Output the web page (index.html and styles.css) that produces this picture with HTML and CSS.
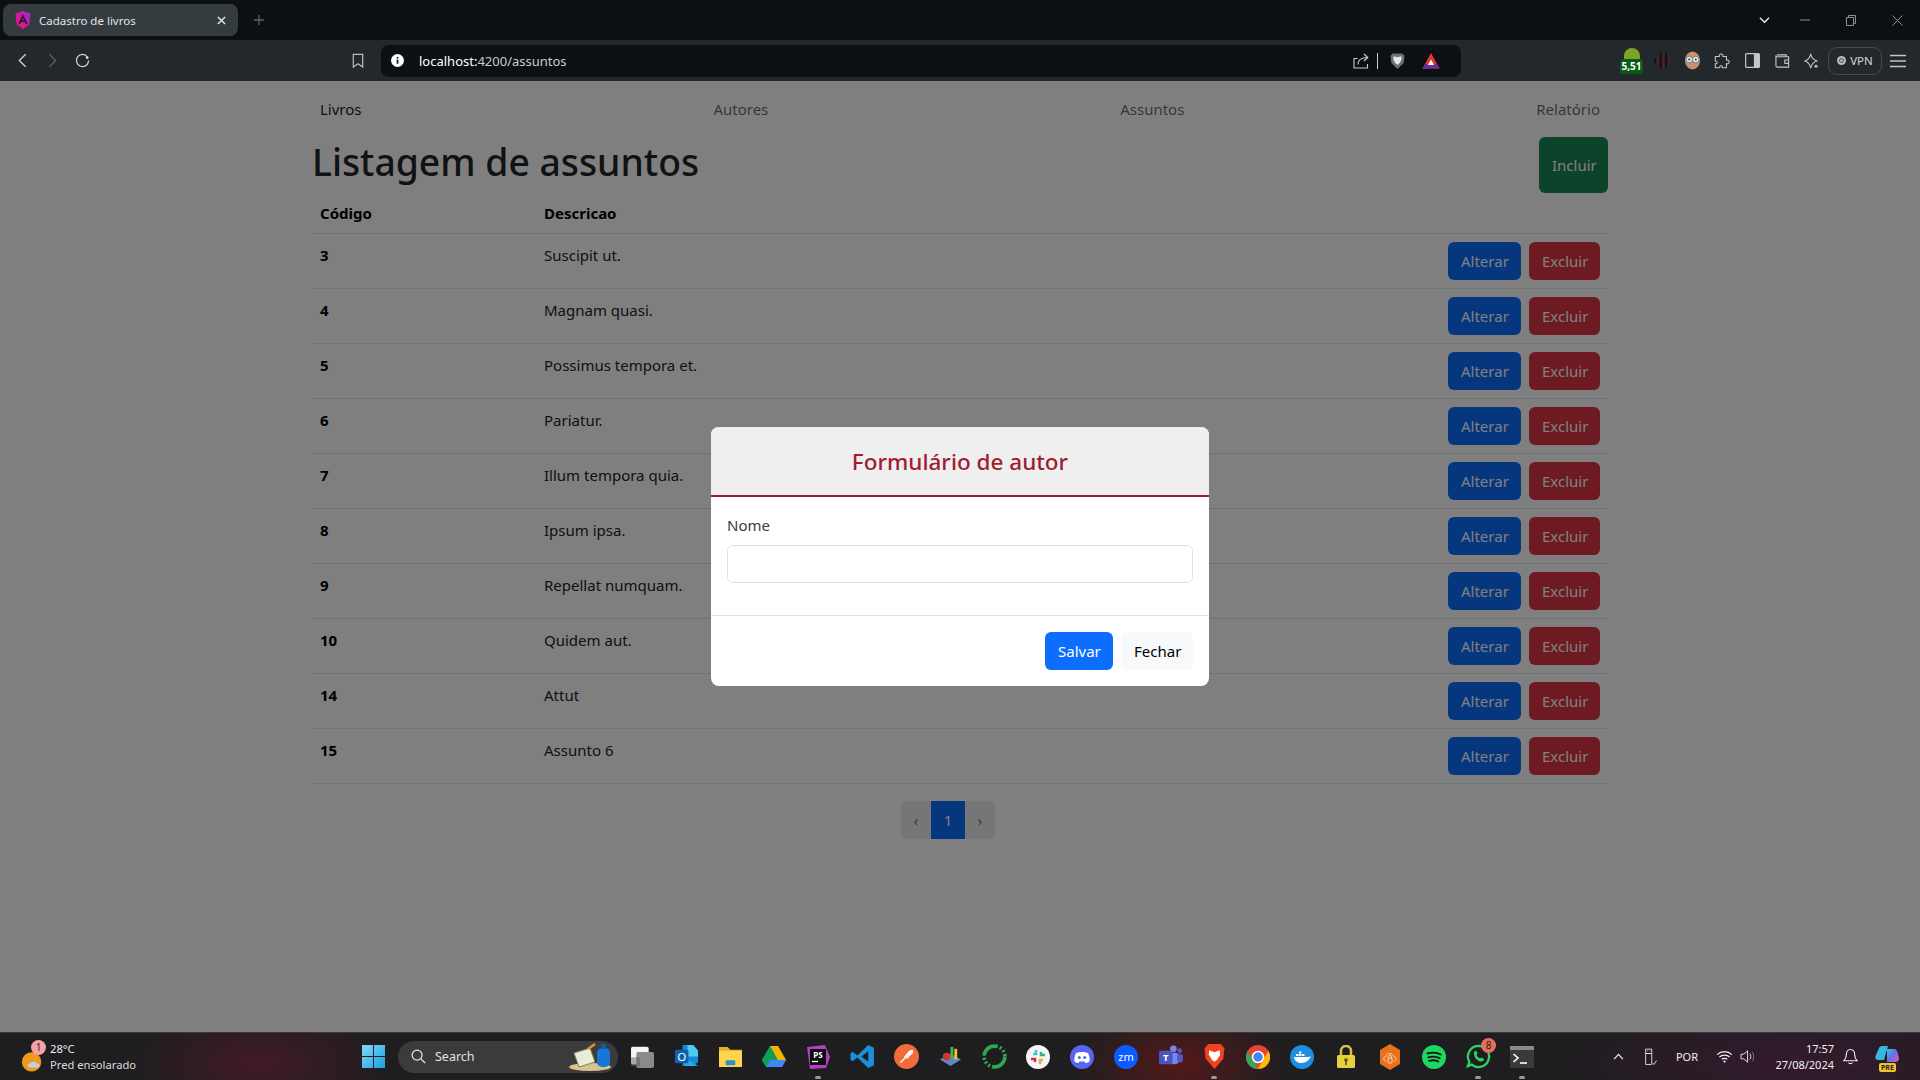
FILE: index.html
```html
<!DOCTYPE html>
<html>
  <head>
    <title>Cadastro de livros</title>
    <meta charset="UTF-8">
    <meta name="viewport" content="width=device-width, initial-scale=1.0">
    <link rel="stylesheet" href="styles.css">
  </head>
  <body>
    <!-- browser tabs -->
    <div class="tabstrip">
      <div class="tab">
        <svg class="favicon" viewBox="0 0 16 18" width="16" height="18">
          <defs><linearGradient id="ng" x1="0" y1="1" x2="1" y2="0"><stop offset="0" stop-color="#f0148c"/><stop offset=".55" stop-color="#d0189c"/><stop offset="1" stop-color="#7a3be8"/></linearGradient></defs>
          <path d="M8 0 15.500 2.600 14.300 13.200 8 18 1.700 13.200.5 2.600Z" fill="url(#ng)"/>
          <path d="M8 3 12.600 13H10.800L9.900 10.900H6.100L5.200 13H3.400ZM8 7 6.900 9.500H9.100Z" fill="#2a1830"/>
        </svg>
        <span class="tab-title">Cadastro de livros</span>
        <svg class="tab-close" viewBox="0 0 10 10" width="9" height="9"><path d="M1 1 9 9M9 1 1 9" stroke="#e8eaed" stroke-width="1.500"/></svg>
      </div>
      <svg class="tab-new" viewBox="0 0 12 12" width="12" height="12"><path d="M6 1V11M1 6H11" stroke="#5a6065" stroke-width="1.300"/></svg>
      <div class="win-controls">
        <div class="win-btn"><svg viewBox="0 0 12 8" width="11" height="8"><path d="M1 1.500 6 6.500 11 1.500" fill="none" stroke="#e8eaed" stroke-width="1.500"/></svg></div>
        <div class="win-btn"><svg viewBox="0 0 10 2" width="10" height="2"><path d="M0 1H10" stroke="#8d9195"/></svg></div>
        <div class="win-btn"><svg viewBox="0 0 10 11" width="10" height="11"><path d="M.5 2.500H7.500V10.500H.5ZM2.500 2.500V.5H9.500V8.500H7.500" fill="none" stroke="#8d9195"/></svg></div>
        <div class="win-btn"><svg viewBox="0 0 11 11" width="11" height="11"><path d="M.5.5 10.500 10.500M10.500.5.5 10.500" stroke="#8d9195"/></svg></div>
      </div>
    </div>

    <!-- browser toolbar -->
    <div class="toolbar">
      <div class="tool-cell"><svg viewBox="0 0 10 16" width="9" height="15"><path d="M8.500 1 1.500 8 8.500 15" fill="none" stroke="#d5d8da" stroke-width="1.400"/></svg></div>
      <div class="tool-cell"><svg viewBox="0 0 10 16" width="9" height="15"><path d="M1.500 1 8.500 8 1.500 15" fill="none" stroke="#5c6165" stroke-width="1.400"/></svg></div>
      <div class="tool-cell"><svg viewBox="0 0 16 16" width="15" height="15"><path d="M13.500 4.500A6.500 6.500 0 1 0 14.500 8" fill="none" stroke="#d5d8da" stroke-width="1.300"/><circle cx="13" cy="5" r="1.500" fill="#d5d8da"/></svg></div>
      <div class="tool-cell bookmark"><svg viewBox="0 0 12 16" width="12" height="15"><path d="M1 1.500H11V15L6 11.500 1 15Z" fill="none" stroke="#b8bcbf" stroke-width="1.300"/></svg></div>
      <div class="urlbar">
        <svg class="url-info" viewBox="0 0 14 14" width="13" height="13"><circle cx="7" cy="7" r="7" fill="#fff"/><path d="M7 6V10.500M7 3.200V4.800" stroke="#111" stroke-width="1.800"/></svg>
        <span class="url-text"><span class="url-host">localhost:</span>4200/assuntos</span>
        <svg class="url-share" viewBox="0 0 16 16" width="16" height="16"><path d="M4.500 5.500H1V15H14.500V11M5 11.500C5 6.500 9 4.500 14.500 4.500M11 1 14.800 4.500 11 8" fill="none" stroke="#c9ccce" stroke-width="1.100"/></svg>
        <span class="url-sep"></span>
        <svg class="url-brave" viewBox="0 0 16 18" width="15" height="18"><path d="M3 1H13L15.500 3.500 14.500 11 8 17.500 1.500 11 .5 3.500Z" fill="#6d6f78"/><path d="M4 4 8 5 12 4 12.500 7 10.500 11 8 13 5.500 11 3.500 7Z" fill="#e6e7ea"/></svg>
        <svg class="url-bat" viewBox="0 0 18 18" width="18" height="18"><path d="M9 1 17.500 16.500H.5Z" fill="#e0382f"/><path d="M.5 16.500 3 12H15L17.500 16.500Z" fill="#6b2f96"/><path d="M9 7.500 12 13H6Z" fill="#fff"/></svg>
      </div>
      <div class="ext-group">
        <div class="tool-cell">
          <div class="ext-gas"><span class="gas-dome"></span><span class="gas-badge">5,51</span></div>
        </div>
        <div class="tool-cell"><svg viewBox="0 0 18 20" width="17" height="20"><path d="M1 7V13M7 1V18M13 1V17" stroke="#0d0d0f" stroke-width="1.500"/><path d="M4 5V15M10 4V19M16 6V14" stroke="#6a1820" stroke-width="1.500"/></svg></div>
        <div class="tool-cell"><svg viewBox="0 0 18 20" width="17" height="19"><ellipse cx="9" cy="10" rx="8" ry="9.500" fill="#c49272"/><circle cx="5.500" cy="9" r="3.500" fill="#dfe7e9" stroke="#777"/><circle cx="12.500" cy="9" r="3.500" fill="#dfe7e9" stroke="#777"/><circle cx="5.500" cy="9" r="1" fill="#333"/><circle cx="12.500" cy="9" r="1" fill="#333"/></svg></div>
        <div class="tool-cell"><svg viewBox="0 0 18 18" width="16" height="16"><path d="M7 1.500C9 .5 10.500 2 10 4H14V8C16.500 7.500 17.500 9 17 10.500 16.500 12 15.500 12.500 14 12V16.500H9.500C10 14 7 13.500 6.500 15.500L6.500 16.500H1.500V12C4 12.500 4.500 9.500 1.500 9V4H6C5.800 3 6 2 7 1.500Z" fill="none" stroke="#c3c6c8" stroke-width="1.200"/></svg></div>
        <div class="tool-cell"><svg viewBox="0 0 16 16" width="15" height="15"><rect x=".7" y=".7" width="14.600" height="14.600" rx="1" fill="none" stroke="#c3c6c8" stroke-width="1.300"/><rect x="9.500" y="1" width="6" height="14" fill="#c3c6c8"/></svg></div>
        <div class="tool-cell"><svg viewBox="0 0 16 16" width="15" height="15"><path d="M14.500 4H2A1.300 1.300 0 0 1 1 2.500V13.500A1.500 1.500 0 0 0 2.500 15H14.500V4ZM2 2H12V4M15 7.500H10.500V11H15" fill="none" stroke="#c3c6c8" stroke-width="1.200"/></svg></div>
        <div class="tool-cell"><svg viewBox="0 0 18 18" width="16" height="16"><path d="M7.500 1C8.500 6 10.500 8 15 9 10.500 10 8.500 12 7.500 17 6.500 12 4.500 10 1 9 4.500 8 6.500 6 7.500 1Z" fill="none" stroke="#c3c6c8" stroke-width="1.200"/><path d="M13.500 13V17M11.500 15H15.500" stroke="#c3c6c8" stroke-width="1.400"/></svg></div>
        <div class="vpn-pill"><span class="vpn-dot"></span>VPN</div>
        <div class="tool-cell"><svg viewBox="0 0 16 14" width="16" height="14"><path d="M0 1.500H16M0 7H16M0 12.500H16" stroke="#c3c6c8" stroke-width="1.300"/></svg></div>
      </div>
    </div>

    <!-- the page itself -->
    <div class="page">
      <div class="container">
        <nav class="site-nav">
          <a class="nav-link active">Livros</a>
          <a class="nav-link">Autores</a>
          <a class="nav-link">Assuntos</a>
          <a class="nav-link">Relatório</a>
        </nav>
        <div class="list-head">
          <h1>Listagem de assuntos</h1>
          <button class="btn btn-include">Incluir</button>
        </div>
        <table class="list-table">
          <thead>
            <tr><th class="col-code">Código</th><th>Descricao</th><th></th></tr>
          </thead>
          <tbody>
            <tr><th>3</th><td>Suscipit ut.</td><td class="actions"><button class="btn btn-edit">Alterar</button><button class="btn btn-del">Excluir</button></td></tr>
            <tr><th>4</th><td>Magnam quasi.</td><td class="actions"><button class="btn btn-edit">Alterar</button><button class="btn btn-del">Excluir</button></td></tr>
            <tr><th>5</th><td>Possimus tempora et.</td><td class="actions"><button class="btn btn-edit">Alterar</button><button class="btn btn-del">Excluir</button></td></tr>
            <tr><th>6</th><td>Pariatur.</td><td class="actions"><button class="btn btn-edit">Alterar</button><button class="btn btn-del">Excluir</button></td></tr>
            <tr><th>7</th><td>Illum tempora quia.</td><td class="actions"><button class="btn btn-edit">Alterar</button><button class="btn btn-del">Excluir</button></td></tr>
            <tr><th>8</th><td>Ipsum ipsa.</td><td class="actions"><button class="btn btn-edit">Alterar</button><button class="btn btn-del">Excluir</button></td></tr>
            <tr><th>9</th><td>Repellat numquam.</td><td class="actions"><button class="btn btn-edit">Alterar</button><button class="btn btn-del">Excluir</button></td></tr>
            <tr><th>10</th><td>Quidem aut.</td><td class="actions"><button class="btn btn-edit">Alterar</button><button class="btn btn-del">Excluir</button></td></tr>
            <tr><th>14</th><td>Attut</td><td class="actions"><button class="btn btn-edit">Alterar</button><button class="btn btn-del">Excluir</button></td></tr>
            <tr><th>15</th><td>Assunto 6</td><td class="actions"><button class="btn btn-edit">Alterar</button><button class="btn btn-del">Excluir</button></td></tr>
          </tbody>
        </table>
        <div class="pager">
          <span class="page-item page-prev">‹</span>
          <span class="page-item page-now">1</span>
          <span class="page-item page-next">›</span>
        </div>
      </div>

      <div class="backdrop">
        <div class="modal">
          <div class="modal-head">Formulário de autor</div>
          <div class="modal-body">
            <label class="field-label" for="nome">Nome</label>
            <input class="field-input" type="text" id="nome">
          </div>
          <div class="modal-foot">
            <button class="btn btn-save">Salvar</button>
            <button class="btn btn-close">Fechar</button>
          </div>
        </div>
      </div>
    </div>

    <!-- windows taskbar -->
    <div class="taskbar">
      <div class="weather">
        <div class="weather-icon">
          <svg viewBox="0 0 24 26" width="23" height="24"><circle cx="11" cy="14" r="10.500" fill="#ed9a1f"/><path d="M9 20C6 20 6 16 9 16 10 13.500 15 13 16.500 15.500 20 15 21 20 18 20Z" fill="#c3cfdc"/></svg>
          <span class="weather-badge">1</span>
        </div>
        <div class="weather-text">
          <span class="weather-temp">28°C</span>
          <span class="weather-desc">Pred ensolarado</span>
        </div>
      </div>
      <svg class="start-logo" viewBox="0 0 23 23" width="23" height="23">
        <defs><linearGradient id="win" x1="0" y1="0" x2="1" y2="1"><stop offset="0" stop-color="#7fdcf7"/><stop offset="1" stop-color="#1c9ee0"/></linearGradient></defs>
        <path d="M0 0H11V11H0ZM12 0H23V11H12ZM0 12H11V23H0ZM12 12H23V23H12Z" fill="url(#win)"/>
      </svg>
      <div class="search-box">
        <svg viewBox="0 0 16 16" width="15" height="15"><circle cx="6.500" cy="6.500" r="5.300" fill="none" stroke="#e8e8e8" stroke-width="1.300"/><path d="M10.500 10.500 15 15" stroke="#e8e8e8" stroke-width="1.400"/></svg>
        <span class="search-text">Search</span>
        <svg class="search-art" viewBox="0 0 44 28" width="44" height="28"><ellipse cx="22" cy="24" rx="21" ry="4" fill="#d8c48e"/><path d="M6 10 22 5 27 19 11 24Z" fill="#e8ecd8" stroke="#6e8a5c"/><path d="M20 6 27 1" stroke="#ef8a3a" stroke-width="2.500"/><rect x="29" y="5" width="13" height="19" rx="5" fill="#1677d8"/><rect x="33" y="1" width="5" height="5" fill="#0f5cab"/></svg>
      </div>
      <div class="app-row">
        <div class="app"><svg viewBox="0 0 26 26" width="23" height="23"><rect x="0" y="2" width="20" height="20" rx="2" fill="#f4f4f4"/><rect x="6" y="8" width="20" height="18" rx="2" fill="#8a8a8a"/><rect x="0" y="14" width="10" height="10" fill="#5c5c5c" opacity=".5"/></svg></div>
        <div class="app"><svg viewBox="0 0 26 26" width="25" height="25"><path d="M9 1H20L25 7V19L20 23H9Z" fill="#1689d8"/><path d="M14 1H20L25 7V13H14Z" fill="#50c8ef"/><path d="M9 13 25 23H11Z" fill="#28a8ea"/><rect x="1" y="6" width="14" height="14" rx="1.500" fill="#0d62ab"/><text x="8" y="17.500" class="svg-label" font-size="12" text-anchor="middle" fill="#fff">O</text></svg></div>
        <div class="app"><svg viewBox="0 0 26 24" width="25" height="23"><path d="M1 2H10L13 5H25V23H1Z" fill="#e5ad2c"/><rect x="1" y="6" width="24" height="17" rx="1" fill="#ffd54f"/><rect x="8" y="16" width="10" height="5" rx="1" fill="#2b8fc9"/></svg></div>
        <div class="app"><svg viewBox="0 0 24 22" width="24" height="22"><path d="M8 0H16L24 14 20 21H4L0 14Z" fill="#0f9d58"/><path d="M8 0 16 14H24L16 0Z" fill="#f4b400"/><path d="M4 21 8 14H24L20 21Z" fill="#4285f4"/><path d="M8 0 0 14 4 21 12 7Z" fill="#0f9d58"/></svg></div>
        <div class="app"><svg viewBox="0 0 24 24" width="24" height="24"><path d="M1 2 19 0 24 12 20 23 4 24Z" fill="#b73dc5"/><rect x="4" y="4" width="16" height="16" fill="#0c0c10"/><text x="12" y="12.500" class="svg-label" font-size="8" font-weight="700" text-anchor="middle" fill="#fff">PS</text><path d="M6 16.500H12" stroke="#fff" stroke-width="1.300"/></svg><span class="running"></span></div>
        <div class="app"><svg viewBox="0 0 24 24" width="25" height="25"><path d="M17.500 1 23 3.500V20.500L17.500 23 7 13 2.500 16.500.5 15V9L2.500 7.500 7 11ZM17.500 7 11 12 17.500 17Z" fill="#1c8fd9"/></svg></div>
        <div class="app"><svg viewBox="0 0 24 24" width="25" height="25"><circle cx="12" cy="12" r="12" fill="#f26b3a"/><path d="M6 18 16 8 18 6M10 13 15 7C16.500 5.500 18.500 7 17.500 8.500L12 14" fill="none" stroke="#fff" stroke-width="1.300"/></svg></div>
        <div class="app"><svg viewBox="0 0 26 24" width="25" height="23"><path d="M2 15 13 9 24 15 13 22Z" fill="#5f86c9"/><circle cx="9" cy="12" r="4" fill="#d9322f"/><rect x="13" y="2" width="3" height="12" fill="#4caf50"/><rect x="17" y="4" width="3" height="11" fill="#f2c230"/></svg></div>
        <div class="app"><svg viewBox="0 0 24 24" width="25" height="25"><circle cx="12" cy="12" r="10" fill="none" stroke="#2fa84f" stroke-width="3.500" stroke-dasharray="18 2 2 2 2 2 2 2"/></svg></div>
        <div class="app"><svg viewBox="0 0 24 24" width="24" height="24"><circle cx="12" cy="12" r="12" fill="#f6f4f2"/><path d="M10 5V9H7" stroke="#36c5f0" stroke-width="2.500" fill="none"/><path d="M19 10H15V7" stroke="#2eb67d" stroke-width="2.500" fill="none"/><path d="M14 19V15H17" stroke="#ecb22e" stroke-width="2.500" fill="none"/><path d="M5 14H9V17" stroke="#e01e5a" stroke-width="2.500" fill="none"/></svg></div>
        <div class="app"><svg viewBox="0 0 24 24" width="24" height="24"><circle cx="12" cy="12" r="12" fill="#5865f2"/><path d="M6 8C9 6.500 15 6.500 18 8 19.500 11 20 14 19.500 16.500 18 17.500 16.500 18 15.500 18L14.500 16.500H9.500L8.500 18C7.500 18 6 17.500 4.500 16.500 4 14 4.500 11 6 8Z" fill="#fff"/><circle cx="9.300" cy="12.500" r="1.500" fill="#5865f2"/><circle cx="14.700" cy="12.500" r="1.500" fill="#5865f2"/></svg></div>
        <div class="app"><svg viewBox="0 0 24 24" width="24" height="24"><circle cx="12" cy="12" r="12" fill="#0b5cff"/><text x="12" y="16" class="svg-label" font-size="11" text-anchor="middle" fill="#fff">zm</text></svg></div>
        <div class="app"><svg viewBox="0 0 26 24" width="25" height="23"><circle cx="16" cy="4" r="3.500" fill="#7b83eb"/><circle cx="22.500" cy="6" r="2.500" fill="#5059c9"/><rect x="12" y="8" width="10" height="12" rx="4" fill="#7b83eb"/><rect x="20" y="9" width="6" height="9" rx="3" fill="#5059c9"/><rect x="1" y="6" width="14" height="14" rx="1.500" fill="#4b53bc"/><text x="8" y="17" class="svg-label" font-size="10" font-weight="700" text-anchor="middle" fill="#fff">T</text></svg></div>
        <div class="app"><svg viewBox="0 0 20 24" width="21" height="25"><path d="M4 0H16L19.500 4 18.500 14 10 24 1.500 14 .5 4Z" fill="#f0431f"/><path d="M5 6 10 8 15 6 15.500 10 12.500 15 10 17 7.500 15 4.500 10Z" fill="#fff"/></svg><span class="running"></span></div>
        <div class="app"><svg viewBox="0 0 24 24" width="24" height="24"><circle cx="12" cy="12" r="12" fill="#ea4335"/><path d="M12 24A12 12 0 0 1 1.600 6L8 17Z" fill="#34a853"/><path d="M12 24 18 13 22.400 6A12 12 0 0 1 12 24Z" fill="#fbbc05"/><circle cx="12" cy="12" r="5.500" fill="#4285f4" stroke="#fff" stroke-width="1.500"/></svg></div>
        <div class="app"><svg viewBox="0 0 24 24" width="24" height="24"><circle cx="12" cy="12" r="12" fill="#1d8fe0"/><path d="M4 12H18C19 12 20 11.500 20.500 11 20 15 16 18 11 18 7 18 4.500 15.500 4 12Z" fill="#fff"/><path d="M6 9H8.500V11H6ZM9 9H11.500V11H9ZM12 9H14.500V11H12ZM9 6.500H11.500V8.500H9Z" fill="#fff"/></svg></div>
        <div class="app"><svg viewBox="0 0 20 24" width="20" height="24"><path d="M5 11V6A5 5 0 0 1 15 6V11" fill="none" stroke="#d6c044" stroke-width="2.500"/><rect x="1" y="10" width="18" height="13" rx="1.500" fill="#e8cf3e"/><circle cx="10" cy="15" r="1.800" fill="#5c5114"/><rect x="9.200" y="15" width="1.600" height="5" fill="#5c5114"/></svg></div>
        <div class="app"><svg viewBox="0 0 22 26" width="22" height="26"><path d="M11 0 21 6V20L11 26 1 20V6Z" fill="#e8711c"/><path d="M7 17C4 17 4 12.500 7 12.500 7.500 8.500 14 8.500 14.800 12.500 18 12.500 18 17 15 17M9 14H13V19H9ZM9.500 14V12.800A1.500 1.500 0 0 1 12.500 12.800V14" fill="none" stroke="#f8d3b4" stroke-width="1"/></svg></div>
        <div class="app"><svg viewBox="0 0 24 24" width="24" height="24"><circle cx="12" cy="12" r="12" fill="#1ed760"/><path d="M5.500 8.500C10 7.200 15 7.500 18.800 9.500M6.300 12.300C10 11.300 14.500 11.500 17.600 13.200M7 15.800C10 15 13.800 15.200 16.300 16.500" fill="none" stroke="#141414" stroke-width="1.900" stroke-linecap="round"/></svg></div>
        <div class="app"><svg viewBox="0 0 26 26" width="25" height="25"><path d="M13 2A11 11 0 1 1 6 21.500L2 23 3.500 18.500A11 11 0 0 1 13 2Z" fill="none" stroke="#2bd366" stroke-width="2.400"/><path d="M9 7.500C7.500 9 8 12.500 10.500 15.500 13 18 16.500 19 18 17.500L19 15.500 15.800 14 14.700 15.200C13 14.500 11.500 13 10.800 11.300L12 10 10.800 7Z" fill="#2bd366"/></svg><span class="app-count">8</span><span class="running"></span></div>
        <div class="app"><svg viewBox="0 0 24 22" width="24" height="22"><rect width="24" height="22" rx="1.500" fill="#3a3a3a"/><rect width="24" height="4" fill="#8a8a8a"/><path d="M3.500 8 8 12 3.500 16" fill="none" stroke="#fff" stroke-width="1.600"/><path d="M10 17H17" stroke="#fff" stroke-width="1.600"/></svg><span class="running"></span></div>
      </div>
      <div class="tray">
        <div class="tray-cell tray-up"><svg viewBox="0 0 12 8" width="11" height="7"><path d="M1 7 6 1.500 11 7" fill="none" stroke="#f0f0f0" stroke-width="1.400"/></svg></div>
        <div class="tray-cell"><svg viewBox="0 0 16 20" width="14" height="18"><path d="M3 1H10V6H3ZM3 6H10V18.500H3ZM5 3H5.800M7.500 3H8.300M11 17 12.500 18.500 15.500 14" fill="none" stroke="#e8e8e8"/></svg></div>
        <div class="tray-lang">POR</div>
        <div class="tray-cell tray-wifi"><svg viewBox="0 0 18 14" width="17" height="13"><path d="M1 5C5.500 .8 12.500 .8 17 5M3.500 7.500C6.500 4.800 11.500 4.800 14.500 7.500M6 10C7.500 8.800 10.500 8.800 12 10" fill="none" stroke="#f0f0f0" stroke-width="1.300"/><circle cx="9" cy="12.500" r="1.200" fill="#f0f0f0"/></svg></div>
        <div class="tray-cell tray-sound"><svg viewBox="0 0 18 16" width="17" height="15"><path d="M1 5.500H4L8 2V14L4 10.500H1Z" fill="none" stroke="#e8e8e8"/><path d="M10.500 5C11.700 6.500 11.700 9.500 10.500 11" fill="none" stroke="#e8e8e8"/><path d="M13 3C15 5.500 15 10.500 13 13" fill="none" stroke="#7a7a7a"/></svg></div>
        <div class="clock"><span>17:57</span><span>27/08/2024</span></div>
        <div class="tray-cell tray-bell"><svg viewBox="0 0 16 18" width="15" height="17"><path d="M8 1.500C4.500 1.500 3.500 4.500 3.500 7.500 3.500 10 2.500 12 1 13.500H15C13.500 12 12.500 10 12.500 7.500 12.500 4.500 11.500 1.500 8 1.500ZM6 15.500C6.500 17 9.500 17 10 15.500" fill="none" stroke="#f0f0f0" stroke-width="1.200"/></svg></div>
        <div class="tray-cell tray-copilot">
          <svg viewBox="0 0 24 24" width="24" height="24">
            <defs><linearGradient id="cop" x1="0" y1="0" x2="1" y2="1"><stop offset="0" stop-color="#2bc2e8"/><stop offset=".5" stop-color="#6a6fe0"/><stop offset="1" stop-color="#e85ab8"/></linearGradient></defs>
            <path d="M7 1H13L9 15H3C0 15 0 12 1 10L4 3C4.500 1.800 5.500 1 7 1Z" fill="#35b8e0"/><path d="M12 4H19C21 4 22 5.500 22.500 7L24 13C24 16 22 17 20 17H12Z" fill="url(#cop)"/>
          </svg>
          <span class="pre-tag">PRE</span>
        </div>
      </div>
    </div>
  </body>
</html>
```
FILE: styles.css
```css
/* Browser window and taskbar frame */
* {
  box-sizing: border-box;
}

html,
body {
  height: 100%;
}

body {
  margin: 0;
  display: flex;
  flex-direction: column;
  overflow: hidden;
  background-color: #fff;
  color: #212529;
  font-family: "Noto Sans", "Open Sans", sans-serif;
  font-size: 15px;
}

svg {
  display: block;
  flex-shrink: 0;
}

.svg-label {
  font-family: "Noto Sans", sans-serif;
}

/* tab strip */
.tabstrip {
  height: 40px;
  display: flex;
  align-items: flex-start;
  padding: 4px 0 0 3px;
  background-color: #0c0f14;
}

.tab {
  width: 235px;
  height: 32px;
  display: flex;
  align-items: center;
  padding: 0 12px;
  border-radius: 8px;
  background-color: #343c3f;
  color: #e2e5e7;
  font-size: 11.500px;
}

.tab-title {
  margin-left: 8px;
  flex: 1;
}

.tab-new {
  margin: 10px 0 0 15px;
}

.win-controls {
  margin-left: auto;
  margin-top: -4px;
  height: 40px;
  display: flex;
}

.win-btn {
  width: 46px;
  height: 40px;
  display: flex;
  align-items: center;
  justify-content: center;
}

.win-btn:first-child {
  width: 36px;
}

/* toolbar */
.toolbar {
  height: 41px;
  display: flex;
  align-items: center;
  padding: 0 7px;
  background-color: #23282c;
}

.tool-cell {
  width: 30px;
  height: 30px;
  display: flex;
  align-items: center;
  justify-content: center;
}

.bookmark {
  margin-left: 246px;
}

.urlbar {
  width: 1080px;
  height: 32px;
  margin-left: 8px;
  display: flex;
  align-items: center;
  padding-left: 10px;
  border-radius: 8px;
  background-color: #0c0f14;
  color: #c9ccce;
  font-size: 13px;
}

.url-text {
  margin-left: 15px;
  flex: 1;
}

.url-host {
  color: #fff;
}

.url-sep {
  width: 1px;
  height: 16px;
  margin: 0 12px 0 8px;
  background-color: #c9ccce;
}

.url-bat {
  margin: 0 21px 0 17px;
}

.ext-group {
  margin-left: auto;
  display: flex;
  align-items: center;
}

.ext-gas {
  position: relative;
  width: 24px;
  height: 26px;
}

.gas-dome {
  position: absolute;
  left: 4px;
  top: 0;
  width: 16px;
  height: 12px;
  border-radius: 8px 8px 0 0;
  background-color: #7ba428;
}

.gas-badge {
  position: absolute;
  left: 0;
  bottom: 0;
  width: 23px;
  height: 15px;
  border-radius: 3px;
  background-color: #0b5a17;
  color: #fff;
  font-size: 10px;
  font-weight: 700;
  line-height: 15px;
  text-align: center;
}

.vpn-pill {
  width: 54px;
  height: 28px;
  margin: 0 1px;
  display: flex;
  align-items: center;
  justify-content: center;
  gap: 4px;
  border: 1px solid #454b4f;
  border-radius: 9px;
  color: #d5d8da;
  font-size: 11.500px;
}

.vpn-dot {
  width: 9px;
  height: 9px;
  border-radius: 50%;
  background-color: #b9bdc0;
  border: 2px solid #b9bdc0;
  box-shadow: inset 0 0 0 1px #4a4f52;
}

/* page content */
.page {
  position: relative;
  flex: 1;
  overflow: hidden;
  background-color: #fff;
}

.container {
  width: 1296px;
  margin: 0 auto;
}

.site-nav {
  height: 56px;
  display: flex;
  align-items: center;
  justify-content: space-between;
  padding: 0 8px;
}

.nav-link {
  color: rgba(0, 0, 0, 0.6);
}

.nav-link.active {
  color: rgba(0, 0, 0, 0.9);
}

.list-head {
  height: 56px;
  display: flex;
  align-items: center;
  justify-content: space-between;
}

h1 {
  margin: 0 0 5px;
  font-size: 37.300px;
  font-weight: 500;
  line-height: 1.2;
}

.btn {
  height: 38px;
  padding: 0 12px;
  border: 1px solid transparent;
  border-radius: 6px;
  color: #fff;
  font-family: inherit;
  font-size: 15px;
}

.btn-include {
  width: 69px;
  height: 56px;
  background-color: #198754;
}

.btn-edit {
  width: 73px;
  background-color: #0d6efd;
}

.btn-del {
  width: 71px;
  margin-left: 8px;
  background-color: #dc3545;
}

.list-table {
  width: 100%;
  border-collapse: collapse;
}

.list-table th,
.list-table td {
  padding: 8px;
  border-bottom: 1px solid #dee2e6;
  text-align: left;
  vertical-align: top;
  line-height: 24px;
}

.list-table tbody th,
.list-table tbody td {
  padding-top: 9px;
  padding-bottom: 7px;
}

.list-table th {
  color: #000;
  font-weight: 700;
}

.list-table td {
  color: #212529;
}

.col-code {
  width: 224px;
}

.list-table .actions {
  padding-top: 8px;
  padding-bottom: 8px;
  text-align: right;
  line-height: 0;
}

.pager {
  display: flex;
  justify-content: center;
  margin-top: 17px;
  padding-right: 24px;
}

.page-item {
  width: 30px;
  height: 38px;
  display: flex;
  align-items: center;
  justify-content: center;
  background-color: #e9ecef;
  color: #6c757d;
  font-size: 14px;
}

.page-prev {
  border-radius: 6px 0 0 6px;
}

.page-next {
  border-radius: 0 6px 6px 0;
}

.page-now {
  width: 34px;
  background-color: #0d6efd;
  color: #fff;
  font-size: 15px;
}

/* modal over the page */
.backdrop {
  position: absolute;
  inset: 0;
  display: flex;
  align-items: center;
  justify-content: center;
  background-color: rgba(0, 0, 0, 0.5);
}

.modal {
  width: 498px;
  height: 259px;
  display: flex;
  flex-direction: column;
  border-radius: 8px;
  overflow: hidden;
  background-color: #fff;
}

.modal-head {
  height: 70px;
  display: flex;
  align-items: center;
  justify-content: center;
  padding-top: 1px;
  border-bottom: 2px solid #8f2030;
  background-color: #efeff0;
  color: #a11c2f;
  font-size: 22.500px;
  font-weight: 500;
}

.modal-body {
  height: 119px;
  padding: 16px;
  border-bottom: 1px solid #dee2e6;
}

.field-label {
  display: block;
  margin-bottom: 8px;
  line-height: 24px;
  color: #383c40;
}

.field-input {
  display: block;
  width: 100%;
  height: 38px;
  border: 1px solid #dee2e6;
  border-radius: 6px;
  background-color: #fff;
}

.modal-foot {
  flex: 1;
  display: flex;
  align-items: center;
  justify-content: flex-end;
  gap: 8px;
  padding: 0 16px;
}

.btn-save {
  width: 68px;
  background-color: #0d6efd;
}

.btn-close {
  width: 72px;
  background-color: #f8f9fa;
  color: #000;
}

/* taskbar */
.taskbar {
  height: 48px;
  display: flex;
  align-items: center;
  border-top: 1px solid #3a3a3a;
  background:
    radial-gradient(ellipse 130px 60px at 260px 30px, rgba(110, 20, 45, 0.45), transparent),
    radial-gradient(ellipse 110px 60px at 1180px 30px, rgba(130, 20, 20, 0.55), transparent),
    radial-gradient(ellipse 260px 60px at 1800px 30px, rgba(80, 20, 60, 0.45), transparent),
    #1e1e20;
  color: #f0f0f0;
}

.weather {
  width: 362px;
  display: flex;
  align-items: center;
  padding-left: 21px;
}

.weather-icon {
  position: relative;
  width: 29px;
  height: 32px;
  display: flex;
  align-items: flex-end;
}

.weather-badge {
  position: absolute;
  left: 10px;
  top: -1px;
  width: 15px;
  height: 15px;
  border-radius: 50%;
  background-color: #f7a0a6;
  color: #222;
  font-size: 10px;
  line-height: 15px;
  text-align: center;
}

.weather-text {
  display: flex;
  flex-direction: column;
  font-size: 11.200px;
  line-height: 16px;
}

.weather-desc {
  color: #dcdcdc;
}

.start-logo {
  margin-right: 13px;
}

.search-box {
  width: 220px;
  height: 32px;
  display: flex;
  align-items: center;
  padding: 0 6px 0 13px;
  border-radius: 16px;
  background-color: rgba(255, 255, 255, 0.13);
  font-size: 12.500px;
}

.search-text {
  margin-left: 9px;
  flex: 1;
  color: #e0e0e0;
}

.app-row {
  display: flex;
  margin-left: 2px;
}

.app {
  position: relative;
  width: 44px;
  height: 47px;
  display: flex;
  align-items: center;
  justify-content: center;
}

.running {
  position: absolute;
  left: 19px;
  bottom: 1px;
  width: 6px;
  height: 3px;
  border-radius: 2px;
  background-color: #9a9a9a;
}

.app-count {
  position: absolute;
  left: 25px;
  top: 5px;
  width: 15px;
  height: 15px;
  border-radius: 50%;
  background-color: #e2705a;
  color: #222;
  font-size: 10px;
  line-height: 15px;
  text-align: center;
}

.tray {
  display: flex;
  align-items: center;
  margin-left: 59px;
}

.tray-cell {
  width: 30px;
  height: 30px;
  display: flex;
  align-items: center;
  justify-content: center;
}

.tray-up {
  margin-right: 2px;
}

.tray-lang {
  width: 44px;
  text-align: center;
  font-size: 11px;
}

.tray-wifi {
  margin-left: 2px;
  width: 26px;
}

.tray-sound {
  width: 22px;
}

.clock {
  width: 75px;
  display: flex;
  flex-direction: column;
  align-items: flex-end;
  font-size: 11px;
  line-height: 16px;
}

.tray-bell {
  margin-left: 1px;
}

.tray-copilot {
  position: relative;
  margin-left: 7px;
}

.pre-tag {
  position: absolute;
  left: 7px;
  bottom: 0;
  padding: 0 2px;
  border-radius: 2px;
  background-color: #f2c230;
  color: #222;
  font-size: 7px;
  font-weight: 700;
  line-height: 9px;
}
```
